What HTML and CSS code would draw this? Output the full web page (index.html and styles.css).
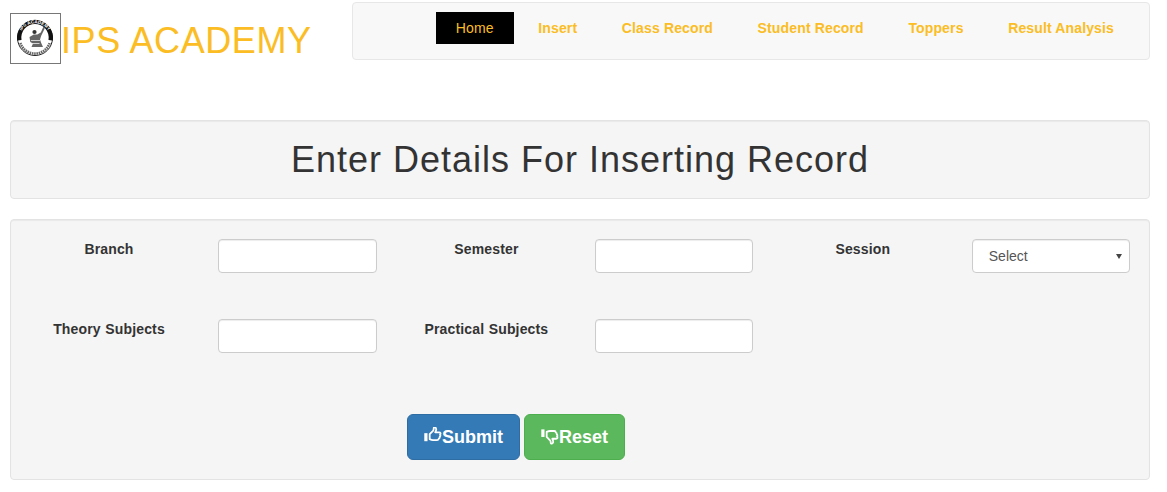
FILE: index.html
```html
<!DOCTYPE html>
<html lang="en">
<head>
<meta charset="utf-8">
<title>IPS Academy</title>
<link rel="stylesheet" href="styles.css">
</head>
<body>
<header class="top">
  <div class="brand">
    <svg class="logo" viewBox="0 0 49 49" aria-hidden="true">
      <defs><path id="arc" d="M8.300 25a15.700 15.700 0 0 1 31.400 0"/></defs>
      <circle cx="24" cy="24" r="17.500" fill="#fff" stroke="#222" stroke-width="1"/>
      <path d="M6.200 26.500A18 18 0 1 1 41.800 26.500L37.500 26A13.700 13.700 0 1 0 10.500 26z" fill="#111"/>
      <path d="M9.300 29a15.500 15.500 0 0 0 29.400 0" fill="none" stroke="#666" stroke-width="2.600" stroke-dasharray="1.600 .7"/>
      <text class="logo-text"><textPath href="#arc" startOffset="50%" text-anchor="middle">IPS ACADEMY</textPath></text>
      <path d="M32.500 12.500l-2.700 6-3.500 2h-3.500l-4.300 2.500 .8 5 2.700 1.500-1.500 3.500h11.500l-1.800-4-1.200-3.500 1.200-3.700 3.500-7.300z" fill="#666"/>
      <path d="M20 26.500h9M20.500 29.500h8" stroke="#eee" stroke-width=".8"/>
      <circle cx="23.500" cy="18" r="2.100" fill="#333"/>
    </svg>
    <span class="brand-name">IPS ACADEMY</span>
  </div>
  <nav class="nav">
    <a class="nav-link active">Home</a>
    <a class="nav-link">Insert</a>
    <a class="nav-link">Class Record</a>
    <a class="nav-link">Student Record</a>
    <a class="nav-link">Toppers</a>
    <a class="nav-link">Result Analysis</a>
  </nav>
</header>
<main class="page">
  <section class="panel title-panel"><h1>Enter Details For Inserting Record</h1></section>
  <form class="panel form-panel">
    <div class="fields">
      <div class="field"><label>Branch</label><input class="control" type="text"></div>
      <div class="field"><label>Semester</label><input class="control" type="text"></div>
      <div class="field"><label>Session</label><div class="select-wrap"><select class="control select"><option>Select</option></select></div></div>
      <div class="field"><label>Theory Subjects</label><input class="control" type="text"></div>
      <div class="field"><label>Practical Subjects</label><input class="control" type="text"></div>
    </div>
    <div class="actions">
      <button type="button" class="btn blue">
        <svg class="icon" viewBox="0 0 19 19" aria-hidden="true"><rect x="0.300" y="6.500" width="3.400" height="8.500" fill="#fff"/><path d="M6 7.500l3.500-3.500c.7-.8.8-2 .8-3 0-1 2.400-.6 2.600 1 .2 1.200-.4 2.500-1 3.600h4c1.600 0 2 1.600 1 2.400.7.900.4 1.800-.3 2.300.2.900-.2 1.600-1 1.900 0 1-.7 1.600-1.700 1.600H9.500c-1.500 0-2.500-.5-3.500-1z" fill="none" stroke="#fff" stroke-width="1.900" stroke-linejoin="round"/></svg>Submit
      </button>
      <button type="button" class="btn green">
        <svg class="icon" viewBox="0 0 19 19" aria-hidden="true"><rect x="0.300" y="2.500" width="3.400" height="8" fill="#fff"/><path d="M6 10.500l3.500 3.500c.7.800.8 2 .8 3 0 1 2.400.6 2.600-1 .2-1.200-.4-2.500-1-3.600h4c1.600 0 2-1.600 1-2.400.7-.9.4-1.800-.3-2.300.2-.9-.2-1.600-1-1.900 0-1-.7-1.600-1.700-1.600H9.500c-1.500 0-2.500.5-3.500 1z" fill="none" stroke="#fff" stroke-width="1.900" stroke-linejoin="round"/></svg>Reset
      </button>
    </div>
  </form>
</main>
</body>
</html>
```
FILE: styles.css
```css
* { box-sizing: border-box; }
html, body { margin: 0; height: 100%; overflow: hidden; }
body {
  background: #fff;
  color: #333;
  font-family: "Liberation Sans", Arial, sans-serif;
  font-size: 14px;
  padding: 2px 17px 0 10px;
}
.top { display: flex; justify-content: space-between; align-items: flex-start; height: 118px; }
.brand { display: flex; align-items: flex-start; margin-top: 11px; }
.logo { width: 51px; height: 51px; border: 1px solid #777; background: #fff; display: block; }
.logo-text { font-size: 4.600px; font-weight: 700; fill: #fff; font-family: "Liberation Sans", sans-serif; }
.brand-name { color: #fbbd23; font-size: 36px; line-height: 51px; margin-top: 2px; letter-spacing: .6px; white-space: nowrap; }
.nav {
  width: 798px; height: 58px;
  background: #f8f8f8;
  border: 1px solid #e7e7e7;
  border-radius: 4px;
  display: flex; gap: 4.6px; justify-content: flex-end;
  padding: 9px 15px 0 0;
}
.nav-link {
  height: 32px; line-height: 32px; padding: 0 20px;
  color: #fbbd23; font-weight: 700; font-size: 14px; white-space: nowrap; letter-spacing: .14px;
}
.nav-link.active { background: #000; font-weight: 400; }
.page { display: flex; flex-direction: column; gap: 20px; }
.panel { background: #f5f5f5; border: 1px solid #e3e3e3; border-radius: 4px; box-shadow: inset 0 1px 1px rgba(0,0,0,.05); }
.title-panel { height: 79px; display: flex; align-items: center; justify-content: center; }
h1 { margin: 0; font-size: 36px; font-weight: 400; letter-spacing: 1px; line-height: 40px; color: #333; }
.form-panel { height: 261px; padding: 19px 19px 19px 9px; }
.fields { display: grid; grid-template-columns: 357px 356px 356px; column-gap: 20.4px; row-gap: 46px; }
.field { display: grid; grid-template-columns: 178px 1fr; column-gap: 20px; align-items: start; }
.field label { text-align: center; font-weight: 700; letter-spacing: .15px; word-spacing: .5px; line-height: 20px; }
.control {
  display: block; width: 100%; height: 34px;
  background: #fff; border: 1px solid #ccc; border-radius: 4px;
  box-shadow: inset 0 1px 1px rgba(0,0,0,.075);
  color: #555; font: 14px "Liberation Sans", Arial, sans-serif;
  padding: 6px 12px;
}
.select-wrap { position: relative; }
.select { appearance: none; -webkit-appearance: none; padding-left: 16px; }
.select-wrap::after {
  content: ""; position: absolute; right: 8px; top: 15px;
  border-left: 3px solid transparent; border-right: 3px solid transparent; border-top: 5px solid #444;
  pointer-events: none;
}
.actions { display: flex; gap: 4px; margin-top: 61px; padding-left: 387px; }
.btn {
  display: flex; align-items: center; height: 46px; padding: 0 16px;
  border: 1px solid; border-radius: 6px; color: #fff;
  font: 700 18px "Liberation Sans", Arial, sans-serif; cursor: pointer;
}
.icon { width: 18px; height: 18px; margin-top: -3px; flex: none; }
.blue { background: #337ab7; border-color: #2e6da4; }
.green { background: #5cb85c; border-color: #4cae4c; }
```
